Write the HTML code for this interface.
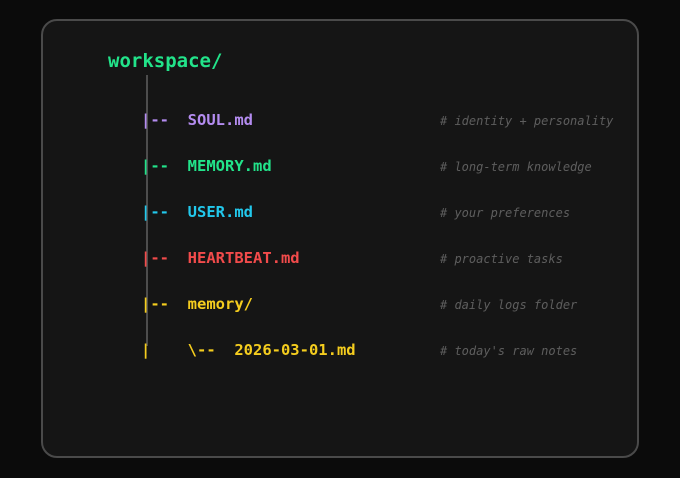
<!DOCTYPE html>
<html><head><meta charset="utf-8"><style>
html,body{margin:0;padding:0;background:#0b0b0b;width:680px;height:478px;overflow:hidden;font-family:"DejaVu Sans Mono","Liberation Mono",monospace;}
.card{position:absolute;left:41px;top:19px;width:598px;height:439px;border:2px solid #4a4a4a;border-radius:16px;background:#151515;box-sizing:border-box;}
.t{position:absolute;white-space:pre;font-weight:bold;font-size:15.5px;line-height:20px;}
.c{position:absolute;white-space:pre;font-style:italic;font-size:12px;color:#5e5e5e;line-height:16px;left:440px;}
.vl{position:absolute;left:146px;top:75px;width:2px;height:271px;background:#4d4d4d;}
</style></head><body>
<div class="card"></div>
<div class="t" style="left:108px;top:49px;font-size:19px;line-height:24px;color:#22e38a">workspace/</div>
<div class="vl"></div>
<div class="t" style="left:141px;top:110px;color:#b48cf0">|--  SOUL.md</div>
<div class="c" style="top:113px">#&nbsp;identity + personality</div>
<div class="t" style="left:141px;top:156px;color:#22e38a">|--  MEMORY.md</div>
<div class="c" style="top:159px">#&nbsp;long-term knowledge</div>
<div class="t" style="left:141px;top:202px;color:#22c8ec">|--  USER.md</div>
<div class="c" style="top:205px">#&nbsp;your preferences</div>
<div class="t" style="left:141px;top:248px;color:#f24b4b">|--  HEARTBEAT.md</div>
<div class="c" style="top:251px">#&nbsp;proactive tasks</div>
<div class="t" style="left:141px;top:294px;color:#f5cd1e">|--  memory/</div>
<div class="c" style="top:297px">#&nbsp;daily logs folder</div>
<div class="t" style="left:141px;top:340px;color:#f5cd1e">|    \--  2026-03-01.md</div>
<div class="c" style="top:343px">#&nbsp;today's raw notes</div>
</body></html>
